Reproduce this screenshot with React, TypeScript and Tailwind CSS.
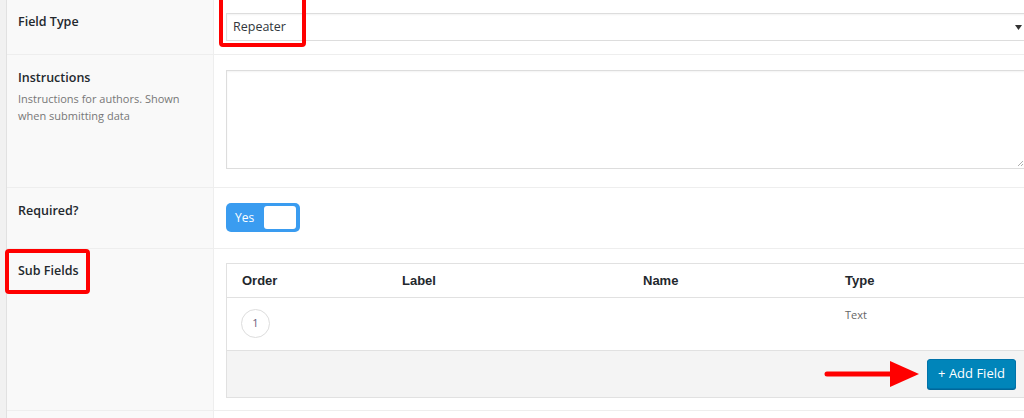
import React from 'react'

const label = "text-[12.5px] font-semibold text-[#23282d] leading-[18px]"

const Row = ({ name, pad, children }: { name: string; pad: string; children?: React.ReactNode }) => (
  <div className="flex border-b border-[#eeeeee]">
    <div className={`w-[207px] shrink-0 bg-[#f9f9f9] border-r border-[#eeeeee] pl-[11px] ${pad}`}>
      <div className={label}>{name}</div>
    </div>
    <div className={`flex-1 pl-[12px] ${pad}`}>{children}</div>
  </div>
)

export default function App() {
  return (
    <div className="relative w-[1024px] h-[418px] overflow-hidden bg-[#f1f1f1] flex font-['Open_Sans',sans-serif]">
      <div className="ml-[6px] flex-1 border-l border-[#e1e1e1] bg-white flex flex-col">
        {/* field type */}
        <div className="flex h-[55px] border-b border-[#eeeeee]">
          <div className="w-[207px] shrink-0 bg-[#f9f9f9] border-r border-[#eeeeee] pl-[11px] pt-[13px]">
            <div className={label}>Field Type</div>
          </div>
          <div className="flex-1 pl-[12px] pt-[13px]">
            <div className="h-[28px] -mr-[4px] border border-[#dddddd] bg-white flex items-center justify-between pl-[6px] pr-[5px] shadow-[inset_0_1px_2px_rgba(0,0,0,0.05)]">
              <span className="text-[12.5px] text-[#32373c]">Repeater</span>
              <svg width="7" height="5" viewBox="0 0 7 5"><path d="M0 0h7L3.5 5z" fill="#333" /></svg>
            </div>
          </div>
        </div>

        {/* instructions */}
        <div className="flex h-[133px] border-b border-[#eeeeee]">
          <div className="w-[207px] shrink-0 bg-[#f9f9f9] border-r border-[#eeeeee] pl-[11px] pt-[14px]">
            <div className={label}>Instructions</div>
            <p className="mt-[3px] text-[11px] leading-[17px] text-[#777] w-[175px]">Instructions for authors. Shown when submitting data</p>
          </div>
          <div className="flex-1 pl-[12px] pt-[15px]">
            <div className="relative h-[99px] -mr-[2px] border border-[#dddddd] bg-white shadow-[inset_0_1px_2px_rgba(0,0,0,0.05)]">
              <svg className="absolute right-[1px] bottom-[1px]" width="7" height="7" viewBox="0 0 7 7"><path d="M1 6L6 1M4 6L6 4" stroke="#999" strokeWidth="0.8" /></svg>
            </div>
          </div>
        </div>

        {/* required */}
        <Row name="Required?" pad="pt-[14px] h-[60px]">
          <div className="mt-[1px] w-[74px] h-[29px] rounded-[5px] bg-[#3a9cf0] flex items-center pl-[9px] pr-[4px] justify-between">
            <span className="text-[12px] text-white">Yes</span>
            <span className="w-[32px] h-[23px] rounded-[3px] bg-white" />
          </div>
        </Row>

        {/* sub fields */}
        <div className="flex h-[162px] border-b border-[#eeeeee]">
          <div className="w-[207px] shrink-0 bg-[#f9f9f9] border-r border-[#eeeeee] pl-[11px] pt-[13px]">
            <div className={label}>Sub Fields</div>
          </div>
          <div className="flex-1 pl-[12px] pt-[14px]">
            <div className="-mr-[4px] border border-[#e1e1e1] font-['Liberation_Sans',sans-serif]">
              <div className="grid grid-cols-[160px_241px_202px_1fr] h-[34px] items-center pl-[15px] border-b border-[#e1e1e1] text-[13px] font-bold text-[#23282d]">
                <span>Order</span>
                <span>Label</span>
                <span>Name</span>
                <span>Type</span>
              </div>
              <div className="grid grid-cols-[160px_241px_202px_1fr] h-[53px] pl-[14px] border-b border-[#e1e1e1]">
                <div className="pt-[11px]">
                  <span className="w-[29px] h-[29px] rounded-full border border-[#dddddd] flex items-center justify-center text-[11px] text-[#675b7a] font-['Open_Sans',sans-serif]">1</span>
                </div>
                <div />
                <div />
                <div className="pt-[9px] pl-[1px] text-[11px] text-[#666] font-['Open_Sans',sans-serif]">Text</div>
              </div>
              <div className="h-[46px] bg-[#f4f4f4] flex items-center justify-end pr-[11px]">
                <button className="h-[30px] w-[89px] rounded-[3px] bg-[#0085ba] border border-[#0073aa] text-white text-[13px] font-['Open_Sans',sans-serif] shadow-[0_1px_0_#006799]">+ Add Field</button>
              </div>
            </div>
          </div>
        </div>

        <div className="flex flex-1">
          <div className="w-[207px] shrink-0 bg-[#f9f9f9] border-r border-[#eeeeee]" />
        </div>
      </div>

      {/* annotations */}
      <div className="absolute left-[219px] top-[-4px] w-[87px] h-[51px] border-[4px] border-[#ff0000] rounded-[4px]" />
      <div className="absolute left-[5px] top-[249px] w-[85px] h-[45px] border-[4px] border-[#ff0000] rounded-[4px]" />
      <svg className="absolute left-[822px] top-[359px]" width="100" height="30" viewBox="0 0 100 30">
        <path d="M5 15H72" stroke="#ff0000" strokeWidth="5" strokeLinecap="round" />
        <path d="M68 2L97 15L68 28Z" fill="#ff0000" />
      </svg>
    </div>
  )
}
